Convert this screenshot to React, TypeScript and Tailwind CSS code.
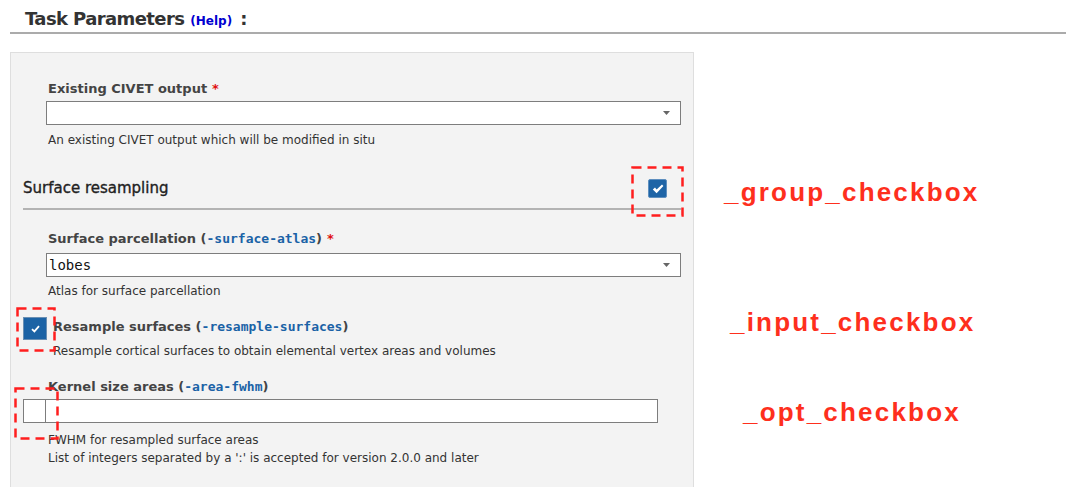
import React from "react";

const ui = "font-['DejaVu_Sans',Verdana,sans-serif]";
const mono = "font-['DejaVu_Sans_Mono',monospace]";

const Caret = () => (
  <svg width="7" height="4" viewBox="0 0 7 4" className="mr-[10px]">
    <path d="M0 0 H7 L3.5 4 Z" fill="#666" />
  </svg>
);

const Select = ({ value }: { value?: string }) => (
  <div className="flex h-[24px] items-center justify-between border border-[#7d7d7d] bg-white">
    <span className={`${mono} pl-[2px] text-[14px] leading-none text-[#111]`}>{value}</span>
    <Caret />
  </div>
);

const Star = () => <span className="ml-[5px] text-[#e01010]">*</span>;

const Code = ({ children }: { children: React.ReactNode }) => (
  <span className={`${mono} text-[13px] font-bold text-[#1a62a6]`}>{children}</span>
);

const Help = ({ children, className = "" }: { children: React.ReactNode; className?: string }) => (
  <p className={`text-[12px] leading-[15px] text-[#333] ${className}`}>{children}</p>
);

const Label = ({ children, className = "" }: { children: React.ReactNode; className?: string }) => (
  <p className={`text-[13px] leading-[17px] font-bold text-[#444] ${className}`}>{children}</p>
);

const Dashed = () => (
  <svg className="absolute inset-0" width="100%" height="100%">
    <rect
      x="1.5"
      y="1.5"
      width="calc(100% - 3px)"
      height="calc(100% - 3px)"
      fill="none"
      stroke="#ff1e1e"
      strokeWidth="2.5"
      strokeDasharray="9 6"
    />
  </svg>
);

export default function App() {
  return (
    <div className={`${ui} relative h-[487px] w-[1066px] overflow-hidden bg-white`}>
      {/* header */}
      <div className="flex h-[32px] items-baseline pl-[25px] pt-[5px]">
        <h2 className="text-[18px] leading-[22px] font-bold tracking-[-0.6px] text-[#333]">Task Parameters</h2>
        <a className="ml-[6px] text-[12px] font-bold text-[#0000d0]">(Help)</a>
        <span className="ml-[8px] text-[18px] font-bold text-[#333]">:</span>
      </div>
      <div className="ml-[10px] h-[2px] bg-[#ababab]" />

      <div className="mt-[18px] flex">
        {/* parameters panel */}
        <div className="ml-[10px] h-[440px] w-[684px] border border-[#dedede] bg-[#f3f3f3]">
          <div className="pl-[35px] pr-[12px] pt-[27px]">
            <Label className="pl-[2px]">
              Existing CIVET output<Star />
            </Label>
            <div className="mt-[4px]">
              <Select />
            </div>
            <Help className="mt-[8px] pl-[2px]">An existing CIVET output which will be modified in situ</Help>
          </div>

          {/* group */}
          <div className="mt-[31px] pl-[12px] pr-[12px]">
            <div className="flex h-[19px] items-start justify-between">
              <span className="text-[15px] leading-[19px] text-[#222] [-webkit-text-stroke:0.35px_#222]">
                Surface resampling
              </span>
              <div className="mr-[14px] flex h-[19px] w-[19px] items-center justify-center rounded-[2px] border border-[#5e8fbf] bg-[#1e64a6]">
                <svg width="12" height="10" viewBox="0 0 12 10">
                  <path d="M0.8 5.6 L3 3.6 L4.6 5.6 L10 0.6 L11.4 2 L4.6 9.2 Z" fill="#fff" />
                </svg>
              </div>
            </div>
            <div className="mt-[10px] h-[2px] bg-[#b3b3b3]" />
          </div>

          <div className="pl-[35px] pr-[12px] pt-[20px]">
            <Label className="pl-[2px]">
              Surface parcellation (<Code>-surface-atlas</Code>)<Star />
            </Label>
            <div className="mt-[6px]">
              <Select value="lobes" />
            </div>
            <Help className="mt-[7px] pl-[2px]">Atlas for surface parcellation</Help>
          </div>

          {/* input checkbox */}
          <div className="mt-[18px] flex pl-[12px]">
            <div className="flex h-[23px] w-[24px] shrink-0 items-center justify-center border border-[#6a8fb3] bg-[#1c63a5]">
              <svg width="9" height="8" viewBox="0 0 9 8">
                <path d="M1 4.2 L3.4 6.4 L8 1.2" fill="none" stroke="#fff" strokeWidth="1.8" />
              </svg>
            </div>
            <div className="ml-[6px] pt-[1px]">
              <Label>
                Resample surfaces (<Code>-resample-surfaces</Code>)
              </Label>
              <Help className="mt-[9px]">Resample cortical surfaces to obtain elemental vertex areas and volumes</Help>
            </div>
          </div>

          {/* optional input */}
          <div className="pl-[12px] pt-[19px]">
            <Label className="pl-[25px]">
              Kernel size areas (<Code>-area-fwhm</Code>)
            </Label>
            <div className="mt-[4px] flex h-[24px] w-[635px] border border-[#7d7d7d] bg-white">
              <div className="w-[22px] border-r border-[#7d7d7d]" />
            </div>
            <Help className="mt-[8px] pl-[25px] leading-[18px]">
              FWHM for resampled surface areas
              <br />
              List of integers separated by a ':' is accepted for version 2.0.0 and later
            </Help>
          </div>
        </div>

        {/* annotations */}
        <div className="flex flex-col font-['Liberation_Sans',Arial,sans-serif] text-[26px] leading-[30px] font-bold tracking-[2.2px] text-[#fe2f1d]">
          <p className="ml-[30px] mt-[125px]">_group_checkbox</p>
          <p className="ml-[36px] mt-[100px]">_input_checkbox</p>
          <p className="ml-[49px] mt-[60px]">_opt_checkbox</p>
        </div>
      </div>

      {/* dashed highlight boxes */}
      <div className="absolute left-[631px] top-[166px] h-[51px] w-[53px]">
        <Dashed />
      </div>
      <div className="absolute left-[16px] top-[307px] h-[45px] w-[40px]">
        <Dashed />
      </div>
      <div className="absolute left-[14px] top-[387px] h-[53px] w-[45px]">
        <Dashed />
      </div>
    </div>
  );
}
